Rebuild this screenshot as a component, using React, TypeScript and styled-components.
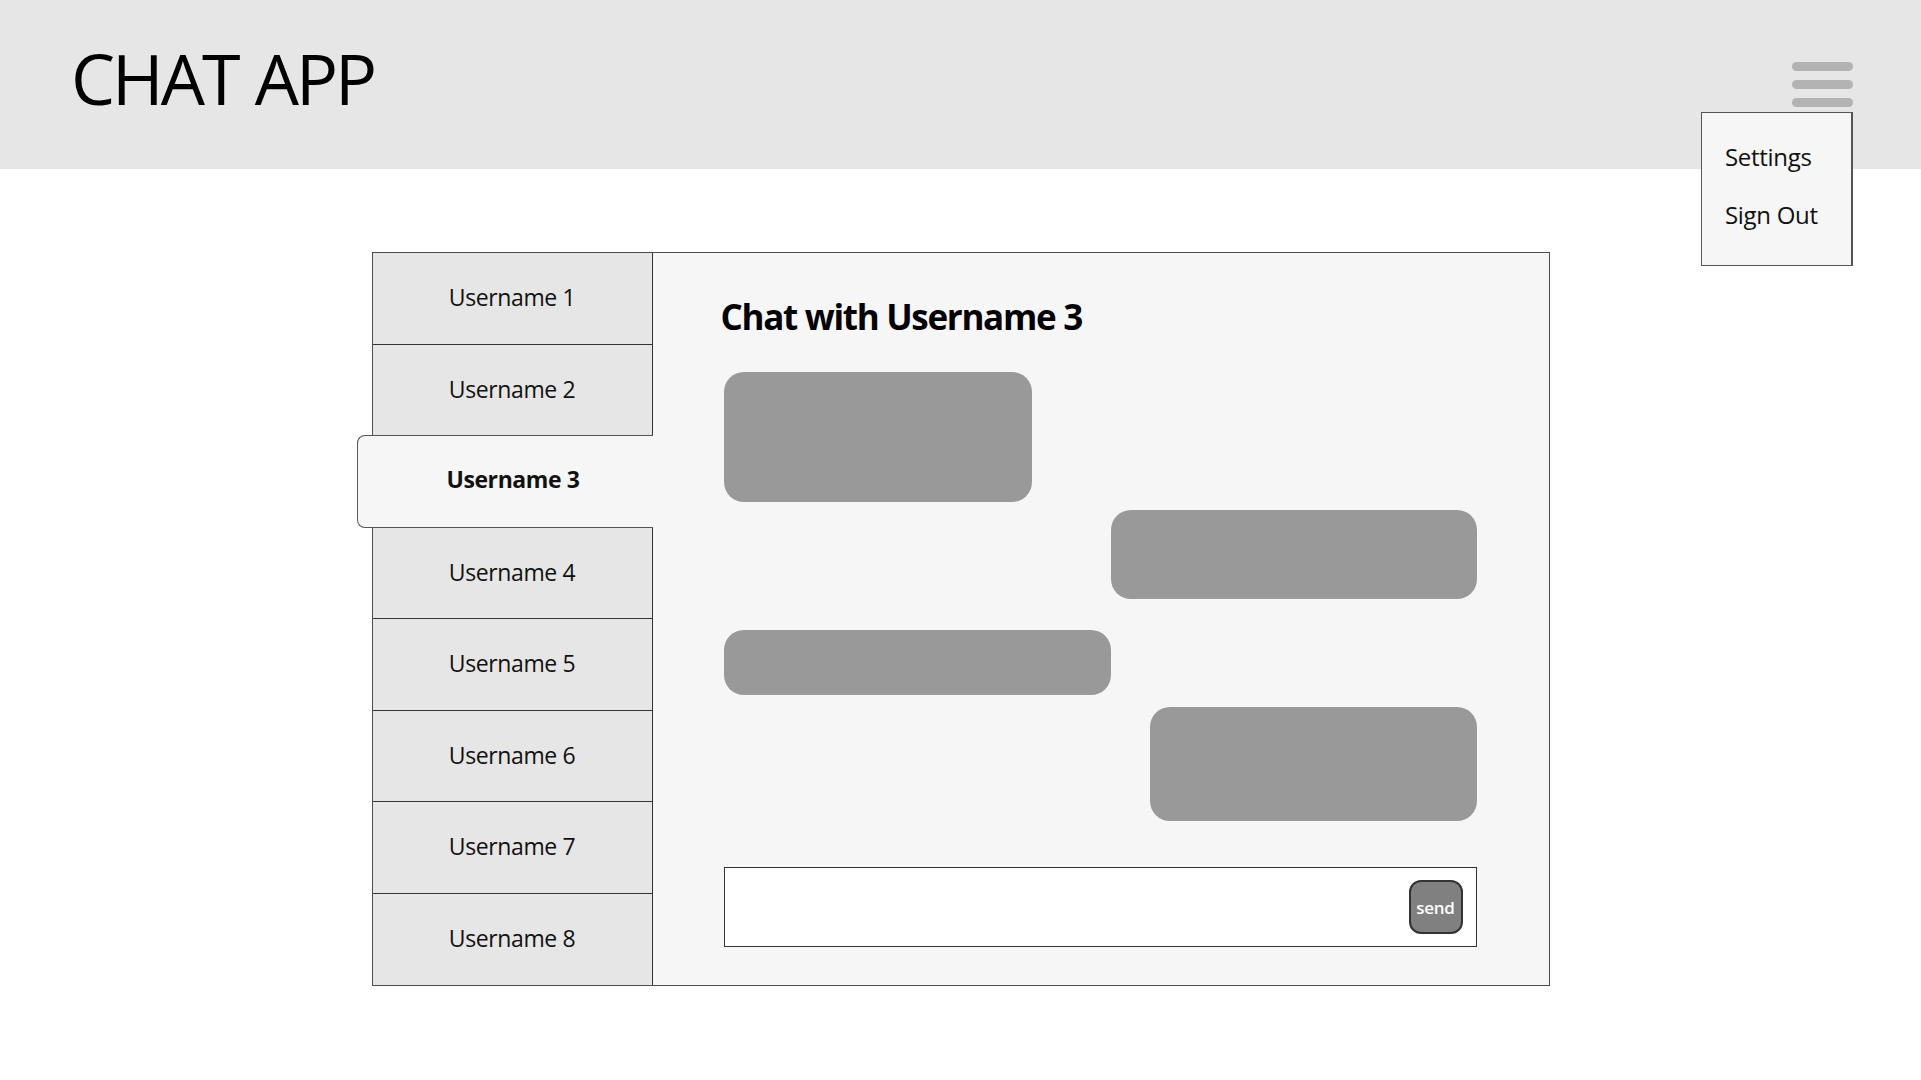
import React from "react";
import styled, { createGlobalStyle } from "styled-components";

const GlobalStyle = createGlobalStyle`
  html, body {
    margin: 0;
    padding: 0;
    background: #ffffff;
  }
  body {
    font-family: "Open Sans", "Noto Sans", Arial, sans-serif;
    color: #000;
  }
  * { box-sizing: border-box; }
`;

const Page = styled.div`
  width: 1921px;
  min-height: 1080px;
  background: #ffffff;
`;

const Header = styled.header`
  height: 169px;
  background: #e6e6e6;
  display: flex;
  justify-content: space-between;
  align-items: flex-start;
  padding: 0 68px 0 71px;
`;

const Title = styled.h1`
  margin: 43px 0 0;
  font-family: "Open Sans", sans-serif;
  font-weight: 400;
  font-size: 70px;
  line-height: 1;
  letter-spacing: -3px;
  word-spacing: 2px;
`;

const MenuWrap = styled.div`
  position: relative;
  margin-top: 62px;
`;

const Hamburger = styled.div`
  width: 61px;
  display: flex;
  flex-direction: column;
  gap: 9px;
`;

const Bar = styled.span`
  display: block;
  height: 9px;
  border-radius: 5px;
  background: #b3b3b3;
`;

const Dropdown = styled.div`
  position: absolute;
  top: 50px;
  right: 0;
  width: 152px;
  height: 154px;
  background: #f6f6f6;
  border: 1px solid #555;
  border-right-width: 2px;
  display: flex;
  flex-direction: column;
  padding: 27px 0 0 23px;
  gap: 24px;
  z-index: 2;
`;

const MenuItem = styled.div`
  font-size: 24px;
  line-height: 34px;
  color: #111;
  letter-spacing: -0.3px;
`;

const Panel = styled.main`
  margin: 83px auto 0;
  width: 1178px;
  height: 734px;
  border: 1px solid #4d4d4d;
  background: #f6f6f6;
  display: flex;
`;

const Sidebar = styled.nav`
  width: 280px;
  display: flex;
  flex-direction: column;
  flex-shrink: 0;
`;

const UserRow = styled.div<{ $active?: boolean; $last?: boolean }>`
  height: ${(p) => (p.$active ? "92.5px" : "91.5px")};
  display: flex;
  align-items: center;
  justify-content: center;
  padding-bottom: ${(p) => (p.$active ? "4px" : "2px")};
  font-size: 23px;
  letter-spacing: -0.4px;
  color: #111;
  background: ${(p) => (p.$active ? "#f6f6f6" : "#e6e6e6")};
  border-right: ${(p) => (p.$active ? "none" : "1px solid #333")};
  border-bottom: ${(p) => (p.$last ? "none" : "1px solid #333")};
  font-weight: ${(p) => (p.$active ? 700 : 400)};
  ${(p) =>
    p.$active &&
    `
    margin-left: -16px;
    margin-top: -1px;
    width: 296px;
    padding-left: 16px;
    border-top: 1px solid #555;
    border-left: 1px solid #555;
    border-bottom: 1px solid #555;
    border-radius: 8px 0 0 8px;
  `}
`;

const Chat = styled.section`
  flex: 1;
  display: flex;
  flex-direction: column;
  padding: 46px 72px 38px 71px;
`;

const ChatTitle = styled.h2`
  margin: 0 0 0 -3px;
  font-size: 35px;
  font-weight: 700;
  line-height: 1;
  letter-spacing: -1.3px;
`;

const Bubble = styled.div<{ $w: number; $h: number; $gap: number; $right?: boolean }>`
  width: ${(p) => p.$w}px;
  height: ${(p) => p.$h}px;
  margin-top: ${(p) => p.$gap}px;
  align-self: ${(p) => (p.$right ? "flex-end" : "flex-start")};
  background: #999999;
  border-radius: 20px;
`;

const InputBox = styled.div`
  margin-top: auto;
  height: 80px;
  background: #ffffff;
  border: 1px solid #333;
  display: flex;
  align-items: center;
  justify-content: flex-end;
  padding-right: 13px;
`;

const SendButton = styled.button`
  width: 54px;
  height: 54px;
  border-radius: 12px;
  background: #808080;
  border: 2px solid #333;
  color: #fff;
  font-family: "Open Sans", sans-serif;
  font-weight: 600;
  font-size: 17px;
  letter-spacing: -0.3px;
  padding: 0;
  cursor: pointer;
`;

const users = [1, 2, 3, 4, 5, 6, 7, 8];
const bubbles = [
  { w: 308, h: 130, gap: 38, right: false },
  { w: 366, h: 89, gap: 8, right: true },
  { w: 387, h: 65, gap: 31, right: false },
  { w: 327, h: 114, gap: 12, right: true },
];

export default function App() {
  return (
    <Page>
      <GlobalStyle />
      <Header>
        <Title>CHAT APP</Title>
        <MenuWrap>
          <Hamburger>
            <Bar />
            <Bar />
            <Bar />
          </Hamburger>
          <Dropdown>
            <MenuItem>Settings</MenuItem>
            <MenuItem>Sign Out</MenuItem>
          </Dropdown>
        </MenuWrap>
      </Header>
      <Panel>
        <Sidebar>
          {users.map((n) => (
            <UserRow key={n} $active={n === 3} $last={n === 8}>
              Username {n}
            </UserRow>
          ))}
        </Sidebar>
        <Chat>
          <ChatTitle>Chat with Username 3</ChatTitle>
          {bubbles.map((b, i) => (
            <Bubble key={i} $w={b.w} $h={b.h} $gap={b.gap} $right={b.right} />
          ))}
          <InputBox>
            <SendButton>send</SendButton>
          </InputBox>
        </Chat>
      </Panel>
    </Page>
  );
}
